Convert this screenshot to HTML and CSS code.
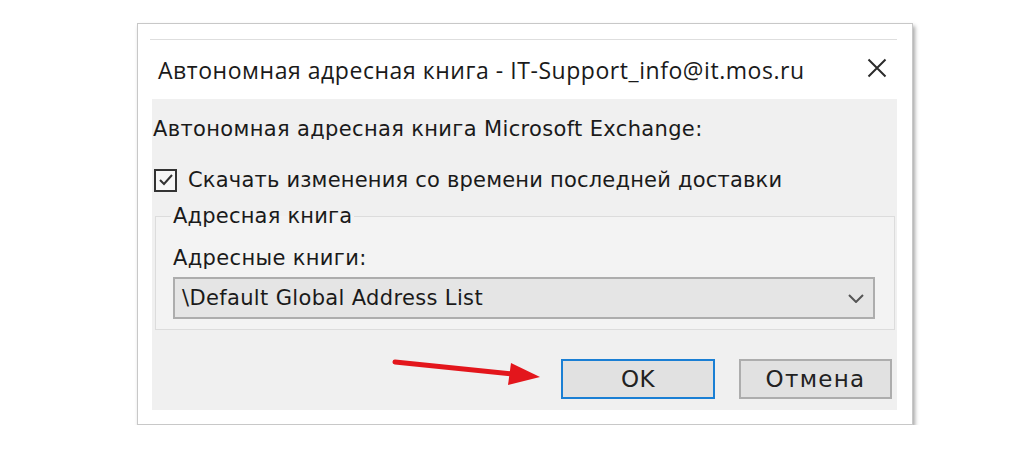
FILE: index.html
```html
<!DOCTYPE html>
<html lang="ru">
<head>
<meta charset="utf-8">
<title>Автономная адресная книга</title>
<link rel="stylesheet" href="styles.css">
</head>
<body>
<div class="stage">
  <div class="dialog">
    <div class="topline"></div>
    <div class="titlebar">
      <span class="title">Автономная адресная книга - IT-Support_info@it.mos.ru</span>
      <svg class="close" width="20" height="20" viewBox="0 0 20 20"><path d="M1.5 1.5 L18.5 18.5 M18.5 1.5 L1.5 18.5" stroke="#2b2b2b" stroke-width="2" fill="none"/></svg>
    </div>
    <div class="panel">
      <div class="heading">Автономная адресная книга Microsoft Exchange:</div>
      <div class="check">
        <span class="box"><svg width="18" height="18" viewBox="0 0 18 18"><path d="M3 9 L7 13 L15 4" stroke="#333" stroke-width="2" fill="none"/></svg></span>
        <span class="check-label">Скачать изменения со времени последней доставки</span>
      </div>
      <fieldset class="group">
        <legend class="group-title">Адресная книга</legend>
        <div class="field-label">Адресные книги:</div>
        <div class="combo">
          <span class="combo-value">\Default Global Address List</span>
          <svg class="chevron" width="16" height="9" viewBox="0 0 16 9"><path d="M1 1 L8 8 L15 1" stroke="#555" stroke-width="2" fill="none"/></svg>
        </div>
      </fieldset>
      <div class="buttons">
        <div class="btn primary">OK</div>
        <div class="btn">Отмена</div>
      </div>
      <svg class="arrow" width="152" height="36" viewBox="0 0 152 36">
        <line x1="4" y1="7" x2="122" y2="19" stroke="#e3161c" stroke-width="5" stroke-linecap="round"/>
        <polygon points="149,22 117,30 120,8" fill="#e3161c"/>
      </svg>
    </div>
  </div>
</div>
</body>
</html>
```
FILE: styles.css
```css
html, body {
  margin: 0;
  padding: 0;
  background: #ffffff;
}
body {
  font-family: "DejaVu Sans", "Open Sans", sans-serif;
  color: #1a1a1a;
}
.stage {
  padding: 23px 0 0 137px;
}
.dialog {
  position: relative;
  box-sizing: border-box;
  width: 776px;
  height: 402px;
  background: #ffffff;
  border: 1px solid #c8c8c8;
  box-shadow: 2px 3px 4px rgba(0, 0, 0, 0.35);
  padding: 0 15px 0 14px;
}
.topline {
  margin: 15px 0 0 -2px;
  height: 1px;
  background: #dedede;
}
.titlebar {
  height: 59px;
  display: flex;
  align-items: center;
  justify-content: space-between;
  padding: 0 10px 0 6px;
}
.title {
  font-family: "Open Sans", "Noto Sans", sans-serif;
  font-size: 23px;
  color: #1a1a1a;
  letter-spacing: 0.55px;
  white-space: nowrap;
}
.close {
  display: block;
  margin-top: -4px;
}
.panel {
  position: relative;
  box-sizing: border-box;
  height: 311px;
  background: #f0f0f0;
  padding: 16px 2px 0 1px;
}
.heading {
  height: 28px;
  line-height: 28px;
  font-size: 21px;
  letter-spacing: 0.35px;
  white-space: nowrap;
}
.check {
  margin-top: 23px;
  height: 28px;
  display: flex;
  align-items: center;
  gap: 11px;
  padding-left: 1px;
}
.box {
  box-sizing: border-box;
  width: 23px;
  height: 23px;
  border: 2px solid #333;
  display: flex;
  align-items: center;
  justify-content: center;
  background: #f7f7f7;
}
.box svg {
  display: block;
}
.check-label {
  font-size: 21px;
  letter-spacing: 0.2px;
  line-height: 28px;
  white-space: nowrap;
}
.group {
  margin: 8px 0 0 2px;
  padding: 14px 19px 10px 17px;
  border: 1px solid #dcdcdc;
  background: #f3f3f3;
  min-width: 0;
}
.group-title {
  padding: 0 2px;
  margin-left: -2px;
  font-size: 21px;
  letter-spacing: 0.2px;
  line-height: 28px;
  height: 28px;
}
.field-label {
  height: 28px;
  line-height: 28px;
  font-size: 21px;
  letter-spacing: 0.35px;
}
.combo {
  box-sizing: border-box;
  margin-top: 5px;
  height: 42px;
  border: 2px solid #adadad;
  background: #e5e5e5;
  display: flex;
  align-items: center;
  justify-content: space-between;
  padding: 0 9px 0 7px;
}
.combo-value {
  font-size: 21px;
  letter-spacing: 0.35px;
}
.chevron {
  display: block;
}
.buttons {
  margin-top: 29px;
  display: flex;
  justify-content: flex-end;
  gap: 24px;
  padding-right: 3px;
}
.btn {
  box-sizing: border-box;
  width: 153px;
  height: 40px;
  border: 2px solid #adadad;
  background: #e1e1e1;
  display: flex;
  align-items: center;
  justify-content: center;
  font-size: 23px;
  letter-spacing: 1.3px;
  color: #222;
}
.btn.primary {
  width: 154px;
  border-color: #1a7fd4;
  letter-spacing: 0.5px;
}
.arrow {
  position: absolute;
  left: 239px;
  top: 256px;
}
```
